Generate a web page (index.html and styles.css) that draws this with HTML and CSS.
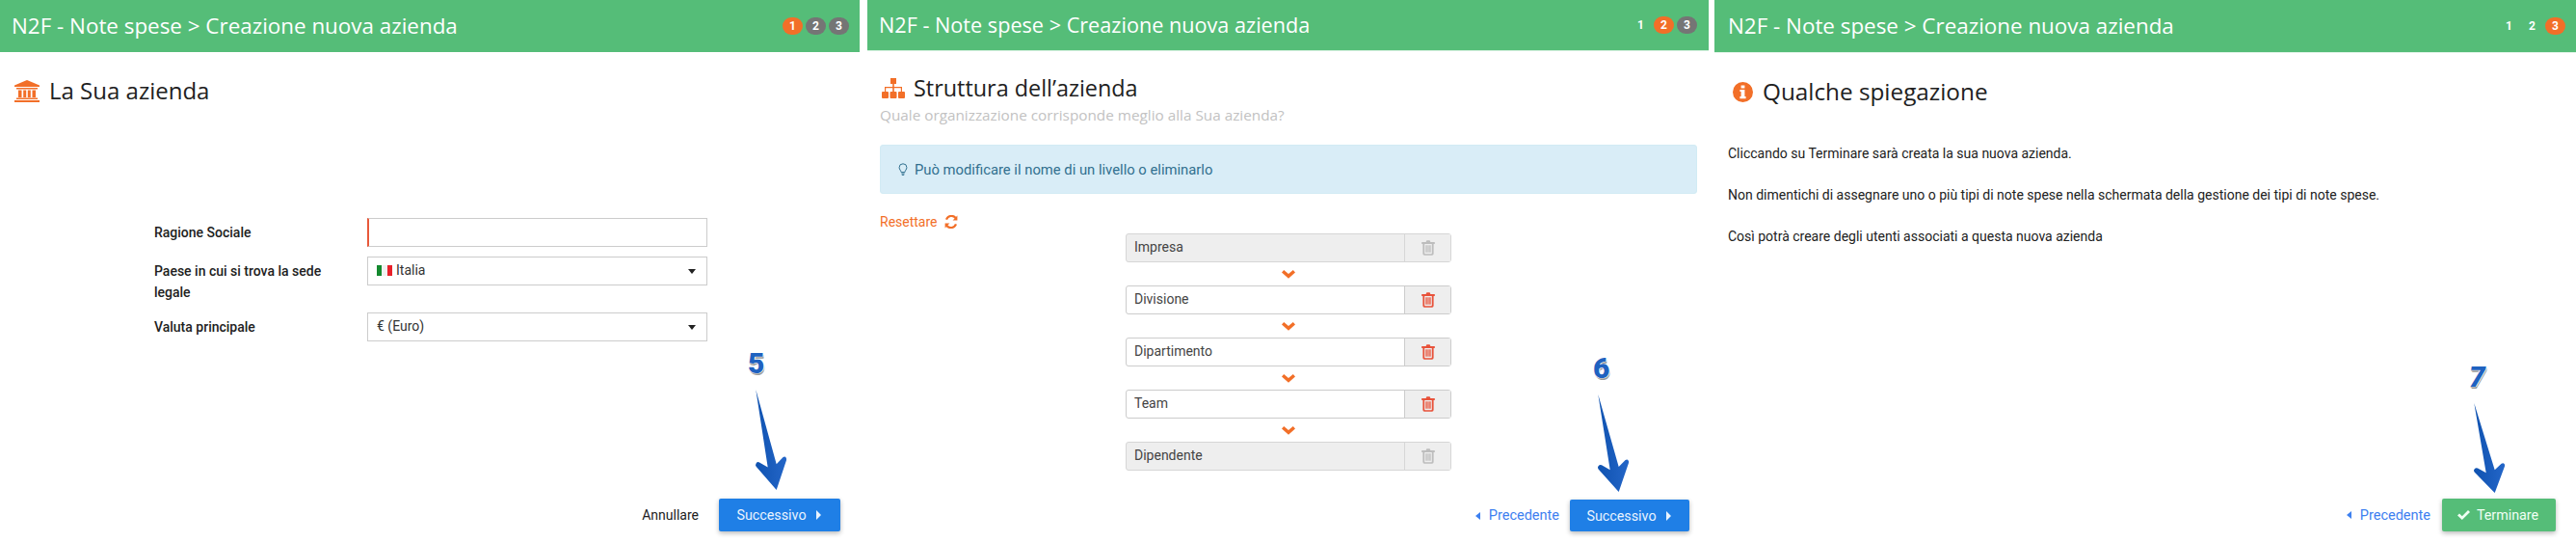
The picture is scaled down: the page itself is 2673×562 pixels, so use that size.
FILE: index.html
```html
<!DOCTYPE html>
<html lang="it">
<head>
<meta charset="utf-8">
<title>N2F - Note spese</title>
<link rel="stylesheet" href="styles.css">
</head>
<body>
<svg class="defs" width="0" height="0" aria-hidden="true">
  <defs>
    <linearGradient id="arrowfill" x1="0" y1="0" x2="1" y2="0">
      <stop offset="0" stop-color="#0f52b0"/>
      <stop offset="1" stop-color="#2466c8"/>
    </linearGradient>
    <symbol id="arrow" viewBox="3 3 34 106.5" preserveAspectRatio="none">
      <path d="M4.3 4 L25.7 81.7 L32.6 74.4 Q34.6 73 35.6 74.8 Q36.4 76 36 77.5 L25.7 108.5 L4.6 84.2 Q3.4 82.4 4.6 80.8 Q6 78.8 8 79.8 L16.7 85 Z" fill="url(#arrowfill)"/>
    </symbol>
    <symbol id="trash" viewBox="0 0 14 16">
      <path d="M4.6 2 L5.4 .2 H8.6 L9.4 2 H13.8 V4 H12.6 V14 Q12.6 15.8 11 15.8 H3 Q1.4 15.8 1.4 14 V4 H.2 V2 Z M3.2 4 V13.4 Q3.2 14.2 3.8 14.2 H10.2 Q10.8 14.2 10.8 13.4 V4 Z M4.4 5.2 H5.7 V12.8 H4.4 Z M6.4 5.2 H7.6 V12.8 H6.4 Z M8.3 5.2 H9.6 V12.8 H8.3 Z" fill="currentColor" fill-rule="evenodd"/>
    </symbol>
    <symbol id="chev" viewBox="0 0 14 9">
      <path d="M2.2 0 L7 4 L11.8 0 L14 2.4 L7 8.8 L0 2.4 Z" fill="currentColor"/>
    </symbol>
  </defs>
</svg>

<main class="sheet">
  <section class="panel panel-one">
    <header class="topbar topbar-one">
      <h1 class="topbar-title">N2F - Note spese &gt; Creazione nuova azienda</h1>
      <ol class="steps">
        <li class="step step-on">1</li>
        <li class="step step-off">2</li>
        <li class="step step-off">3</li>
      </ol>
    </header>
    <div class="heading heading-one">
      <svg class="ico-bank" viewBox="0 0 26 23" aria-hidden="true">
        <path d="M13 0 L26 5.5 V7 H0 V5.5 Z M2 8 H24 V9.5 H2 Z M4 10.5 H7.5 V18 H4 Z M9.2 10.5 H12.2 V18 H9.2 Z M13.8 10.5 H16.8 V18 H13.8 Z M18.5 10.5 H22 V18 H18.5 Z M2 18.6 H24 V20 H2 Z M0 21 H26 V23 H0 Z" fill="#f26f28"/>
      </svg>
      <h2 class="heading-text heading-text-one">La Sua azienda</h2>
    </div>
    <form class="company-form">
      <label class="field-label">Ragione Sociale</label>
      <div class="control control-required"></div>
      <label class="field-label">Paese in cui si trova la sede legale</label>
      <div class="control control-select">
        <span class="flag"><i class="flag-g"></i><i class="flag-w"></i><i class="flag-r"></i></span>
        <span class="select-value">Italia</span>
        <span class="select-caret"></span>
      </div>
      <label class="field-label">Valuta principale</label>
      <div class="control control-select">
        <span class="select-value">€ (Euro)</span>
        <span class="select-caret"></span>
      </div>
    </form>
    <footer class="actions actions-one">
      <a class="link-cancel">Annullare</a>
      <button class="btn btn-blue btn-next-one" type="button">Successivo<span class="caret-right"></span></button>
    </footer>
    <span class="callout callout-5">5</span>
    <svg class="pointer pointer-5" aria-hidden="true"><use href="#arrow"/></svg>
  </section>

  <section class="panel panel-two">
    <header class="topbar topbar-two">
      <h1 class="topbar-title topbar-title-small">N2F - Note spese &gt; Creazione nuova azienda</h1>
      <ol class="steps">
        <li class="step step-plain">1</li>
        <li class="step step-on">2</li>
        <li class="step step-off">3</li>
      </ol>
    </header>
    <div class="heading heading-two">
      <svg class="ico-sitemap" viewBox="0 0 24 21" aria-hidden="true">
        <path d="M9 0 H15 V6 H12.8 V9 H21 V14 H23 Q24 14 24 15 V20 Q24 21 23 21 H18 Q17 21 17 20 V15 Q17 14 18 14 H19.8 V10.2 H12.8 V14 H14.5 Q15.5 14 15.5 15 V20 Q15.5 21 14.5 21 H9.5 Q8.5 21 8.5 20 V15 Q8.5 14 9.5 14 H11.2 V10.2 H4.2 V14 H6 Q7 14 7 15 V20 Q7 21 6 21 H1 Q0 21 0 20 V15 Q0 14 1 14 H3 V9 H11.2 V6 H9 Z" fill="#f26f28"/>
      </svg>
      <h2 class="heading-text heading-text-two">Struttura dell’azienda</h2>
    </div>
    <p class="subtitle">Quale organizzazione corrisponde meglio alla Sua azienda?</p>
    <div class="notice">
      <svg class="ico-bulb" viewBox="0 0 10 14" aria-hidden="true">
        <path d="M5 .8 A3.9 3.9 0 0 1 8.9 4.7 C8.9 6.6 7.2 7.6 6.9 9.6 H3.1 C2.8 7.6 1.1 6.6 1.1 4.7 A3.9 3.9 0 0 1 5 .8 Z M3.4 11 H6.6 M3.8 12.4 H6.2" fill="none" stroke="#31708f" stroke-width="1"/>
      </svg>
      <span>Può modificare il nome di un livello o eliminarlo</span>
    </div>
    <a class="reset">Resettare
      <svg class="ico-refresh" viewBox="0 0 14 14" aria-hidden="true">
        <path d="M11.6 3 A5.6 5.6 0 0 0 2 4.6 M2.4 11 A5.6 5.6 0 0 0 12 9.4" fill="none" stroke="#f26f28" stroke-width="2.2"/>
        <path d="M13.4 .6 V5.4 H8.6 Z M.6 13.4 V8.6 H5.4 Z" fill="#f26f28"/>
      </svg>
    </a>
    <div class="levels">
      <div class="level level-locked"><span class="level-name">Impresa</span><span class="level-del"><svg class="ico-trash"><use href="#trash"/></svg></span></div>
      <svg class="ico-chev"><use href="#chev"/></svg>
      <div class="level"><span class="level-name">Divisione</span><span class="level-del"><svg class="ico-trash"><use href="#trash"/></svg></span></div>
      <svg class="ico-chev"><use href="#chev"/></svg>
      <div class="level"><span class="level-name">Dipartimento</span><span class="level-del"><svg class="ico-trash"><use href="#trash"/></svg></span></div>
      <svg class="ico-chev"><use href="#chev"/></svg>
      <div class="level"><span class="level-name">Team</span><span class="level-del"><svg class="ico-trash"><use href="#trash"/></svg></span></div>
      <svg class="ico-chev"><use href="#chev"/></svg>
      <div class="level level-locked"><span class="level-name">Dipendente</span><span class="level-del"><svg class="ico-trash"><use href="#trash"/></svg></span></div>
    </div>
    <footer class="actions actions-two">
      <a class="link-prev"><span class="caret-left"></span>Precedente</a>
      <button class="btn btn-blue btn-next-two" type="button">Successivo<span class="caret-right"></span></button>
    </footer>
    <span class="callout callout-6">6</span>
    <svg class="pointer pointer-6" aria-hidden="true"><use href="#arrow"/></svg>
  </section>

  <section class="panel panel-three">
    <header class="topbar topbar-three">
      <h1 class="topbar-title">N2F - Note spese &gt; Creazione nuova azienda</h1>
      <ol class="steps">
        <li class="step step-plain">1</li>
        <li class="step step-plain">2</li>
        <li class="step step-on">3</li>
      </ol>
    </header>
    <div class="heading heading-three">
      <svg class="ico-info" viewBox="0 0 21 21" aria-hidden="true">
        <path d="M10.5 0 A10.5 10.5 0 1 1 10.5 21 A10.5 10.5 0 1 1 10.5 0 Z M8.6 3.4 V6.4 H12.4 V3.4 Z M7.4 8 V10 H8.6 V15 H7.4 V17.2 H13.6 V15 H12.4 V8 Z" fill="#f26f28" fill-rule="evenodd"/>
      </svg>
      <h2 class="heading-text heading-text-three">Qualche spiegazione</h2>
    </div>
    <div class="explain">
      <p class="explain-line">Cliccando su Terminare sarà creata la sua nuova azienda.</p>
      <p class="explain-line">Non dimentichi di assegnare uno o più tipi di note spese nella schermata della gestione dei tipi di note spese.</p>
      <p class="explain-line">Così potrà creare degli utenti associati a questa nuova azienda</p>
    </div>
    <footer class="actions actions-three">
      <a class="link-prev"><span class="caret-left"></span>Precedente</a>
      <button class="btn btn-green" type="button">
        <svg class="ico-check" viewBox="0 0 13 10" aria-hidden="true"><path d="M0 5.4 L2 3.4 L4.8 6.2 L11 0 L13 2 L4.8 10 Z" fill="currentColor"/></svg>Terminare
      </button>
    </footer>
    <span class="callout callout-7">7</span>
    <svg class="pointer pointer-7" aria-hidden="true"><use href="#arrow"/></svg>
  </section>
</main>
</body>
</html>
```
FILE: styles.css
```css
* { box-sizing: border-box; }
html, body { margin: 0; padding: 0; background: #fff; }
body { width: 2673px; height: 562px; overflow: hidden; font-family: Roboto, "Liberation Sans", sans-serif; font-size: 14px; color: #212121; }
.defs { position: absolute; }

.sheet { display: flex; height: 562px; }
.panel { position: relative; display: flex; flex-direction: column; height: 562px; flex: none; }
.panel-one { width: 892px; margin-right: 8px; }
.panel-two { width: 873px; margin-right: 6px; }
.panel-three { width: 894px; }

.topbar { display: flex; align-items: center; justify-content: space-between; background: #55bd78; color: #fff; flex: none; padding-left: 12px; padding-right: 11px; }
.topbar-one { height: 54px; }
.topbar-two { height: 53px; padding-right: 12px; border-bottom: 1px solid #cfeeda; }
.topbar-three { height: 55px; padding-left: 14px; border-bottom: 1px solid #e2f4e8; }
.topbar-title { margin: 0; font: 400 22.4px/30px "Open Sans", sans-serif; white-space: nowrap; }
.topbar-title-small { font-size: 21.65px; }

.steps { display: flex; gap: 3px; list-style: none; margin: 0; padding: 0; }
.step { width: 21px; height: 18px; border-radius: 9px; text-align: center; font: 700 12px/18px Roboto, sans-serif; color: #fff; }
.step-on { background: #f26f28; }
.step-off { background: #757575; }
.step-plain { background: transparent; }

.heading { display: flex; align-items: center; height: 30px; flex: none; }
.heading-one { margin-top: 25px; padding-left: 15px; }
.heading-two { margin-top: 23px; padding-left: 15px; }
.heading-three { margin-top: 25px; padding-left: 19px; }
.heading-text { margin: 0 0 0 10px; font: 400 23.4px/30px "Open Sans", sans-serif; color: #212121; white-space: nowrap; }
.heading-text-one { font-size: 24px; }
.heading-text-two { margin-left: 9px; }
.heading-text-three { font-size: 24.3px; }
.ico-bank { width: 26px; height: 23px; flex: none; }
.ico-sitemap { width: 24px; height: 21px; flex: none; }
.ico-info { width: 21px; height: 21px; flex: none; }

.company-form { display: grid; grid-template-columns: 221px 353px; row-gap: 10px; margin: 117px 0 0 160px; }
.field-label { padding: 4px 30px 0 0; font-weight: 500; font-size: 14px; line-height: 22px; color: #212121; }
.control { height: 30px; border: 1px solid #ccc; background: #fff; display: flex; align-items: center; }
.control-required { border-left: 2px solid #e8593a; }
.control-select { padding: 0 11px 2px 9px; }
.select-value { flex: 1; color: #333; font-size: 14px; line-height: 20px; }
.select-caret { width: 0; height: 0; border-left: 4px solid transparent; border-right: 4px solid transparent; border-top: 5px solid #222; margin-top: 2px; }
.flag { display: flex; width: 16px; height: 11px; margin-right: 4px; flex: none; }
.flag i { flex: 1; }
.flag-g { background: #14892e; }
.flag-w { background: #f1f1f1; }
.flag-r { background: #e8202a; }

.actions { display: flex; align-items: center; justify-content: flex-end; margin-top: auto; padding-bottom: 11px; flex: none; }
.actions-one { padding-right: 20px; gap: 21px; }
.actions-two { padding-right: 20px; gap: 11px; }
.actions-three { padding-right: 21px; gap: 12px; }
.link-cancel { font-size: 14px; color: #212121; }
.link-prev { display: flex; align-items: center; color: #3d80f0; font-size: 14.5px; }
.caret-left { width: 0; height: 0; border-top: 4px solid transparent; border-bottom: 4px solid transparent; border-right: 5px solid #3d80f0; margin-right: 9px; }
.caret-right { display: inline-block; width: 0; height: 0; border-top: 5px solid transparent; border-bottom: 5px solid transparent; border-left: 5px solid currentColor; margin-left: 10px; vertical-align: 0; }

.btn { display: flex; align-items: center; justify-content: center; height: 34px; border: 0; border-radius: 2px; color: #fff; font: 400 14.3px/20px Roboto, sans-serif; box-shadow: 0 2px 5px rgba(0,0,0,.28); padding: 0 2px 0 0; }
.btn-blue { background: #1f7fe6; color: #e9f3ff; }
.btn-next-one { width: 126px; }
.btn-next-two { width: 124px; height: 33px; }
.btn-green { width: 118px; background: #55bd78; color: #f0fff4; }
.ico-check { width: 13px; height: 10px; margin-right: 7px; }

.subtitle { margin: 3px 0 0 13px; font: 400 15.3px/20px "Open Sans", sans-serif; color: #c2c2c2; white-space: nowrap; }
.notice { display: flex; align-items: center; height: 51px; margin: 21px 12px 0 13px; padding-left: 18px; background: #d9edf7; border: 1px solid #d2ebf4; border-radius: 3px; color: #31708f; font-size: 14.8px; flex: none; }
.ico-bulb { width: 10px; height: 14px; margin-right: 7px; }
.reset { display: flex; align-items: center; height: 20px; margin: 19px 0 0 13px; color: #f26f28; font-size: 14px; }
.ico-refresh { width: 14px; height: 14px; margin-left: 7px; }

.levels { display: flex; flex-direction: column; align-items: center; width: 338px; margin: 2px 0 0 268px; }
.level { display: flex; width: 338px; height: 30px; border: 1px solid #ccc; border-radius: 3px; background: #fff; flex: none; }
.level-name { flex: 1; padding: 0 8px; line-height: 26px; font-size: 14px; color: #444; }
.level-del { display: flex; align-items: center; justify-content: center; width: 48px; background: #eee; border-left: 1px solid #ccc; color: #e8523a; }
.level-locked { background: #eee; border-color: #d6d6d6; }
.level-locked .level-del { color: #bdbdbd; border-left-color: #d6d6d6; }
.ico-trash { width: 14px; height: 16px; }
.ico-chev { width: 14px; height: 9px; color: #f26f28; margin: 8px 0 7px; flex: none; }

.explain { margin: 39px 0 0 14px; }
.explain-line { margin: 0 0 23px; font-size: 14px; line-height: 20px; color: #212121; white-space: nowrap; }

.callout { position: absolute; font: 900 30px/30px Roboto, sans-serif; color: #1f62c0; text-shadow: 1px 0 0 #fff, -1px 0 0 #fff, 0 1px 0 #bbb, 1px 2px 0 #999; }
.callout-5 { left: 776px; top: 362px; }
.callout-6 { left: 753px; top: 367px; }
.callout-7 { left: 783px; top: 376px; font-style: italic; }

.pointer { position: absolute; overflow: visible; }
.pointer-5 { left: 783px; top: 403px; width: 34px; height: 106px; }
.pointer-6 { left: 757px; top: 408px; width: 34px; height: 103px; }
.pointer-7 { left: 787px; top: 417px; width: 34px; height: 95px; }
```
